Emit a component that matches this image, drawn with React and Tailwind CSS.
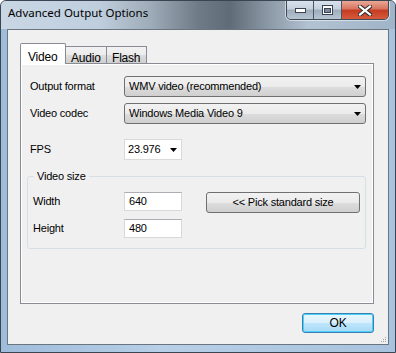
import React from 'react'

const ui = { fontFamily: '"Liberation Sans", Arial, sans-serif' }

function Arrow() {
  return (
    <svg width="7" height="4" viewBox="0 0 7 4" className="shrink-0">
      <path d="M0 0h7L3.5 4z" fill="#000" />
    </svg>
  )
}

function Combo({ value }) {
  return (
    <div className="flex items-center justify-between w-[242px] h-[21px] pl-[4px] pr-[4px] rounded-[3px] border border-[#707070] bg-[linear-gradient(#f2f2f2_0%,#ebebeb_50%,#dddddd_51%,#cfcfcf_100%)]">
      <span className="leading-none">{value}</span>
      <Arrow />
    </div>
  )
}

function Field({ value }) {
  return (
    <div className="w-[58px] h-[19px] flex items-center pl-[4px] bg-white border border-[#d6d8dc] border-t-[#abadb3]">
      <span className="leading-none">{value}</span>
    </div>
  )
}

function CaptionButtons() {
  return (
    <div className="flex h-[20px] mt-[-1px] border border-[#3f4a57] rounded-b-[5px] overflow-hidden shadow-[0_0_0_1px_rgba(255,255,255,0.5)]">
      <div className="w-[27px] flex items-center justify-center border-r border-[#4c5663] bg-[linear-gradient(#d8e2ec_0%,#c4d0dd_45%,#9eacbb_50%,#b7c5d3_100%)]">
        <svg width="11" height="5" viewBox="0 0 11 5">
          <rect x="0.5" y="0.5" width="10" height="4" fill="#fff" stroke="#384250" />
        </svg>
      </div>
      <div className="w-[28px] flex items-center justify-center border-r border-[#4c5663] bg-[linear-gradient(#d8e2ec_0%,#c4d0dd_45%,#9eacbb_50%,#b7c5d3_100%)]">
        <svg width="11" height="10" viewBox="0 0 11 10">
          <rect x="0.5" y="0.5" width="10" height="9" fill="#fff" stroke="#384250" />
          <rect x="2.5" y="3.5" width="6" height="4" fill="#7c8a9a" stroke="#384250" />
        </svg>
      </div>
      <div className="w-[46px] flex items-center justify-center bg-[linear-gradient(#eaa897_0%,#d7735d_45%,#c43b20_50%,#d65a3c_100%)]">
        <svg width="14" height="11" viewBox="0 0 14 11">
          <path d="M2 1.5L12 9.5M12 1.5L2 9.5" stroke="#2f2f2f" strokeWidth="4.2" strokeLinecap="square" />
          <path d="M2 1.5L12 9.5M12 1.5L2 9.5" stroke="#fff" strokeWidth="2.2" strokeLinecap="square" />
        </svg>
      </div>
    </div>
  )
}

export default function App() {
  return (
    <div
      className="w-[396px] h-[353px] flex flex-col border border-[#3b4552] rounded-t-[6px] overflow-hidden bg-[linear-gradient(90deg,#9fbcdb_0%,#b7cfe7_40%,#a9c3de_100%)]"
      style={ui}
    >
      {/* title bar */}
      <div className="h-[28px] flex items-start justify-between bg-[linear-gradient(90deg,#c9d7e5_0%,#bfcedd_25%,#9eabb8_38%,#6f7b87_50%,#5f6b77_58%,#8c99a6_68%,#b2c2d2_78%,#a0b4c8_100%)]">
        <span
          className="pl-[7px] pt-[6px] text-[11.5px] text-black leading-none"
          style={{ fontFamily: '"Noto Sans", "Open Sans", sans-serif' }}
        >
          Advanced Output Options
        </span>
        <div className="mr-[6px]">
          <CaptionButtons />
        </div>
      </div>

      {/* client area */}
      <div className="mx-[6px] mb-[7px] flex-1 flex flex-col border border-[#6b7580] bg-[#f0f0f0] pt-[12px] pl-[12px] pr-[14px] relative text-[11px] tracking-[-0.2px] text-black">
        {/* tabs */}
        <div className="flex items-end h-[21px]">
          <div className="w-[46px] h-[21px] pl-[7px] pt-[4px] bg-white border border-b-0 border-[#898c95] rounded-t-[2px] relative z-10 mb-[-1px] text-[12px]">
            Video
          </div>
          <div className="w-[41px] h-[17px] pl-[5px] pt-[2px] border border-b-0 border-l-0 border-[#898c95] bg-[linear-gradient(#f2f2f2,#ebebeb_50%,#dddddd_51%,#cfcfcf)] text-[12px]">
            Audio
          </div>
          <div className="w-[40px] h-[17px] pl-[5px] pt-[2px] border border-b-0 border-l-0 border-[#898c95] bg-[linear-gradient(#f2f2f2,#ebebeb_50%,#dddddd_51%,#cfcfcf)] text-[12px]">
            Flash
          </div>
        </div>

        {/* tab panel */}
        <div className="h-[241px] border border-[#898c95] bg-[#f0f0f0] shadow-[inset_1px_1px_0_#fff,inset_-1px_-1px_0_#fff] pl-[9px] pt-[12px]">
          <div className="flex items-center h-[21px]">
            <span className="w-[94px]">Output format</span>
            <Combo value="WMV video (recommended)" />
          </div>
          <div className="flex items-center h-[21px] mt-[6px]">
            <span className="w-[94px]">Video codec</span>
            <Combo value="Windows Media Video 9" />
          </div>
          <div className="flex items-center h-[21px] mt-[15px]">
            <span className="w-[94px]">FPS</span>
            <div className="w-[58px] h-[21px] flex items-center justify-between pl-[3px] pr-[4px] bg-white border border-[#d9d9d9]">
              <span className="leading-none">23.976</span>
              <Arrow />
            </div>
          </div>

          {/* group box */}
          <div className="relative mt-[16px] ml-[-3px] w-[339px] h-[73px] border border-[#d5dfe5] rounded-[3px] pl-[5px] pt-[15px]">
            <span className="absolute left-[6px] top-[-8px] px-[3px] bg-[#f0f0f0] leading-[14px]">Video size</span>
            <div className="flex items-center">
              <div className="flex flex-col gap-[8px]">
                <div className="flex items-center h-[19px]">
                  <span className="w-[91px]">Width</span>
                  <Field value="640" />
                </div>
                <div className="flex items-center h-[19px]">
                  <span className="w-[91px]">Height</span>
                  <Field value="480" />
                </div>
              </div>
              <button className="ml-[24px] mt-[-25px] w-[154px] h-[21px] rounded-[3px] border border-[#707070] bg-[linear-gradient(#f2f2f2_0%,#ebebeb_50%,#dddddd_51%,#cfcfcf_100%)] leading-none">
                {'<< Pick standard size'}
              </button>
            </div>
          </div>
        </div>

        {/* footer */}
        <div className="flex justify-end mt-[9px]">
          <button className="w-[72px] h-[20px] rounded-[3px] border border-[#3c7fb1] shadow-[inset_0_0_0_1px_#48d2fb] bg-[linear-gradient(#eaf6fd_0%,#d9f0fc_50%,#bee6fd_51%,#a7d9f5_100%)] text-[12px] leading-none">
            OK
          </button>
        </div>

        <svg width="7" height="7" viewBox="0 0 7 7" className="absolute right-[1px] bottom-[1px]">
          <rect x="5" y="1" width="1" height="1" fill="#a0a0a0" />
          <rect x="3" y="3" width="1" height="1" fill="#a0a0a0" />
          <rect x="5" y="3" width="1" height="1" fill="#a0a0a0" />
          <rect x="1" y="5" width="1" height="1" fill="#a0a0a0" />
          <rect x="3" y="5" width="1" height="1" fill="#a0a0a0" />
          <rect x="5" y="5" width="1" height="1" fill="#a0a0a0" />
        </svg>
      </div>
    </div>
  )
}
